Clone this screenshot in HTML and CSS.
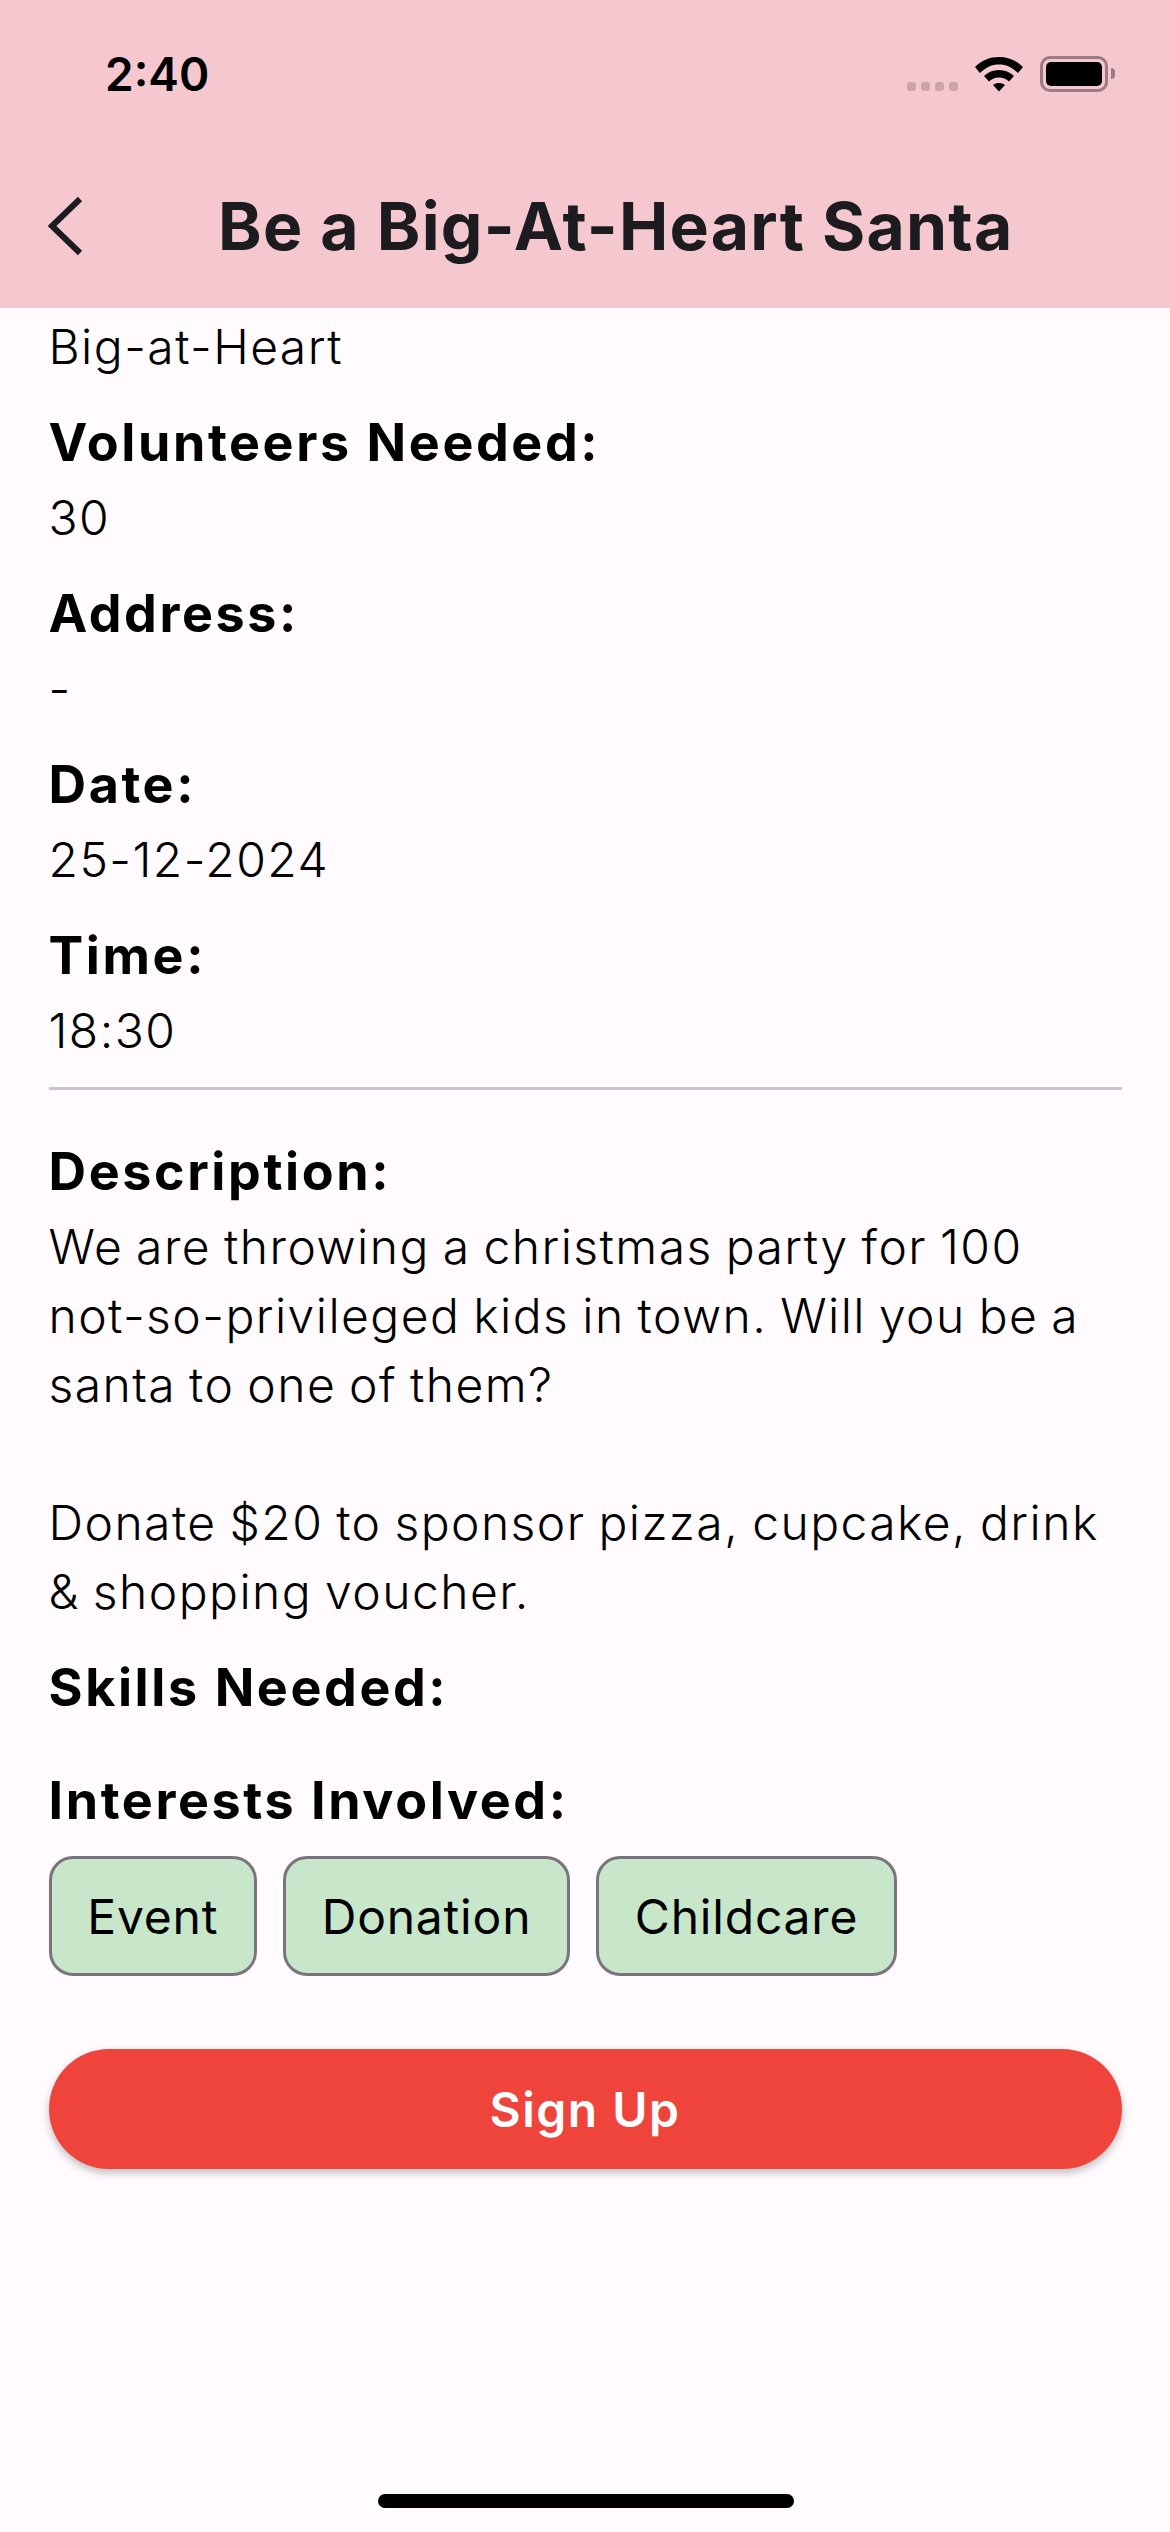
FILE: index.html
```html
<!DOCTYPE html>
<html lang="en">
  <head>
    <meta charset="UTF-8" />
    <meta name="viewport" content="width=device-width, initial-scale=1.0" />
    <title>Be a Big-At-Heart Santa</title>
    <link rel="stylesheet" href="styles.css">
  </head>
  <body>
    <div class="phone">
      <header class="top">
        <div class="status">
          <span class="clock">2:40</span>
          <div class="status-icons">
            <div class="signal"><i></i><i></i><i></i><i></i></div>
            <svg class="wifi" width="50" height="36" viewBox="0 0 50 36">
              <path d="M1 11 C8 4 16 1 25 1 C34 1 42 4 49 11 L44 17 C38 11 32 8.500 25 8.500 C18 8.500 12 11 6 17 Z" />
              <path d="M10 20 C14 16 19 14 25 14 C31 14 36 16 40 20 L35 25.500 C32 23 29 21.500 25 21.500 C21 21.500 18 23 15 25.500 Z" />
              <path d="M19 29 C21 27.500 23 27 25 27 C27 27 29 27.500 31 29 L25 35.500 Z" />
            </svg>
            <div class="battery"><div class="battery-fill"></div></div>
            <div class="battery-cap"></div>
          </div>
        </div>
        <div class="appbar">
          <svg class="back" width="36" height="60" viewBox="0 0 36 60">
            <path d="M33 3 L5 30 L33 57" fill="none" stroke="#1c1b1f" stroke-width="6" />
          </svg>
          <h1>Be a Big-At-Heart Santa</h1>
        </div>
      </header>

      <main class="content">
        <p class="value org">Big-at-Heart</p>
        <h3>Volunteers Needed:</h3>
        <p class="value">30</p>
        <h3>Address:</h3>
        <p class="value">-</p>
        <h3>Date:</h3>
        <p class="value">25-12-2024</p>
        <h3>Time:</h3>
        <p class="value">18:30</p>
        <hr />
        <h3>Description:</h3>
        <p class="value desc">We are throwing a christmas party for 100 not-so-privileged kids in town. Will you be a santa to one of them?<br /><br />Donate $20 to sponsor pizza, cupcake, drink &amp; shopping voucher.</p>
        <h3 class="skills">Skills Needed:</h3>
        <h3 class="interests">Interests Involved:</h3>
        <div class="chips">
          <span class="chip">Event</span>
          <span class="chip">Donation</span>
          <span class="chip">Childcare</span>
        </div>
        <button class="signup">Sign Up</button>
      </main>

      <div class="home-bar"></div>
    </div>
  </body>
</html>
```

FILE: styles.css
```css
* {
  box-sizing: border-box;
}
body {
  margin: 0;
  font-family: Inter, "Liberation Sans", sans-serif;
  background-color: #fffbfe;
  color: #000;
}
.phone {
  width: 1170px;
  height: 2532px;
  position: relative;
  overflow: hidden;
}
.top {
  height: 308px;
  background: #f4c8ce;
}
.status {
  height: 182px;
  display: flex;
  justify-content: space-between;
  padding: 46px 55px 0 105px;
}
.clock {
  font-size: 46px;
  font-weight: 600;
  line-height: 56px;
}
.status-icons {
  display: flex;
  align-items: flex-start;
  padding-top: 10px;
}
.signal {
  display: flex;
  gap: 5px;
  margin-top: 26px;
  margin-right: 16px;
}
.signal i {
  width: 9px;
  height: 9px;
  border-radius: 3px;
  background: #cba5ab;
}
.wifi {
  margin-right: 16px;
}
.battery {
  width: 68px;
  height: 36px;
  border: 3px solid #9c7c82;
  border-radius: 10px;
  padding: 3px;
}
.battery-fill {
  height: 100%;
  background: #000;
  border-radius: 5px;
}
.battery-cap {
  width: 4px;
  height: 11px;
  margin: 12px 0 0 3px;
  background: #9c7c82;
  border-radius: 0 4px 4px 0;
}
.appbar {
  display: flex;
  align-items: center;
  height: 88px;
  padding-left: 47px;
}
.back {
  flex: none;
}
.appbar h1 {
  margin: 0 0 0 135px;
  font-size: 66px;
  font-weight: 700;
  line-height: 88px;
  letter-spacing: 1.250px;
  color: #1c1b1f;
  white-space: nowrap;
}
.content {
  padding: 4px 48.500px 0;
}
h3 {
  margin: 0;
  font-size: 52px;
  font-weight: 700;
  line-height: 80px;
  letter-spacing: 2.600px;
}
.value {
  margin: 0 0 22px;
  font-size: 48px;
  font-weight: 350;
  line-height: 69px;
  letter-spacing: 1.450px;
  word-spacing: -2px;
}
hr {
  margin: 3px 0 42px;
  border: none;
  height: 3px;
  background: #cac4d0;
}
.skills {
  margin-bottom: 33px;
}
.interests {
  margin-bottom: 15px;
}
.chips {
  display: flex;
  gap: 26px;
}
.chip {
  display: flex;
  align-items: center;
  height: 120px;
  padding: 0 35.750px;
  background: #c8e6c9;
  border: 3px solid #79747e;
  border-radius: 24px;
  font-size: 48px;
  letter-spacing: 0.800px;
}
.signup {
  display: block;
  width: 100%;
  height: 120px;
  margin-top: 73px;
  border: none;
  border-radius: 60px;
  background: #ef443b;
  color: #fff;
  font-family: inherit;
  font-size: 48px;
  font-weight: 600;
  letter-spacing: 1.500px;
  box-shadow: 0 4px 8px rgba(0, 0, 0, 0.25);
}
.home-bar {
  position: absolute;
  left: 378px;
  bottom: 24px;
  width: 416px;
  height: 14px;
  border-radius: 7px;
  background: #000;
}
```
